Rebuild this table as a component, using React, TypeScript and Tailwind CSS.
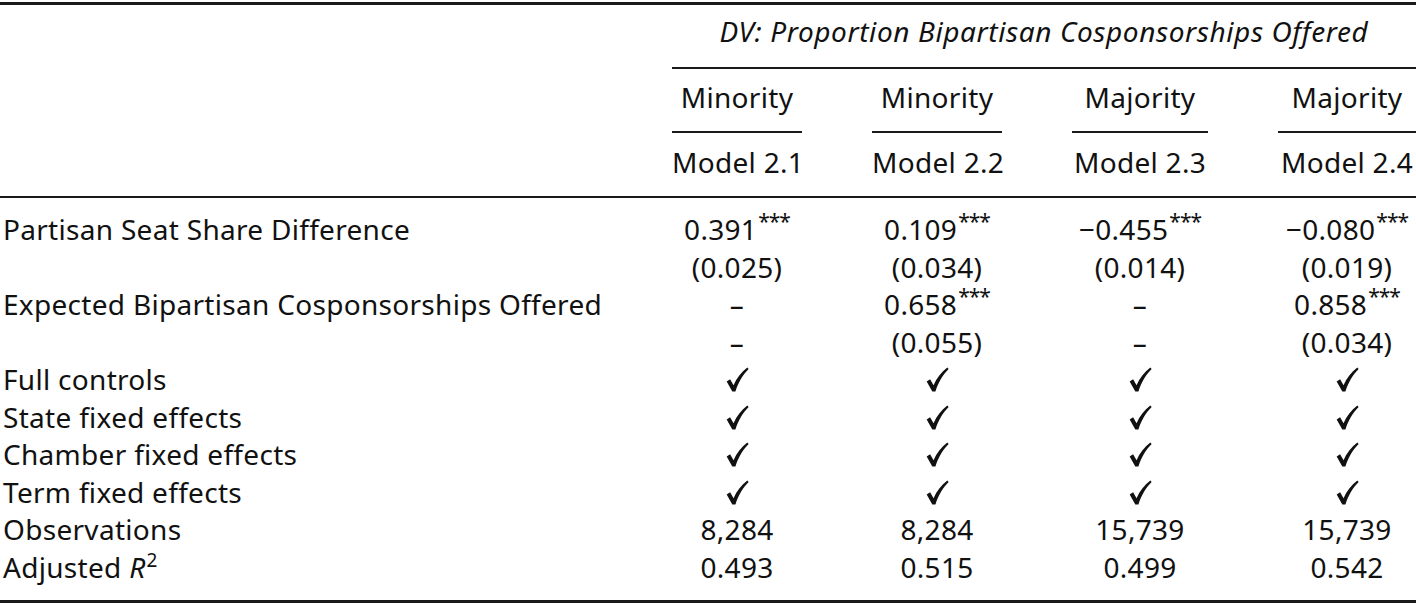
import React from "react";

const Check = () => (
  <svg width="23" height="25" viewBox="0 0 22 24" className="inline-block" aria-hidden="true">
    <path
      d="M0.6 13.8 L3.9 11.7 L7.2 17.6 C10.2 10.4 14.6 4.9 20.4 0.4 L21.7 1.8 C16.3 7 11.9 14.3 9 23.5 L6 23.5 Z"
      fill="#111"
    />
  </svg>
);

const Stars = () => (
  <span className="relative -top-[8px] ml-[1px] text-[21px] leading-none tracking-[-1px]">***</span>
);

type Cell = React.ReactNode;

const rows: { label: Cell; cells: Cell[] }[] = [
  {
    label: "Partisan Seat Share Difference",
    cells: [
      <>0.391<Stars /></>,
      <>0.109<Stars /></>,
      <>−0.455<Stars /></>,
      <>−0.080<Stars /></>,
    ],
  },
  { label: "", cells: ["(0.025)", "(0.034)", "(0.014)", "(0.019)"] },
  {
    label: "Expected Bipartisan Cosponsorships Offered",
    cells: ["–", <>0.658<Stars /></>, "–", <>0.858<Stars /></>],
  },
  { label: "", cells: ["–", "(0.055)", "–", "(0.034)"] },
  { label: "Full controls", cells: [<Check />, <Check />, <Check />, <Check />] },
  { label: "State fixed effects", cells: [<Check />, <Check />, <Check />, <Check />] },
  { label: "Chamber fixed effects", cells: [<Check />, <Check />, <Check />, <Check />] },
  { label: "Term fixed effects", cells: [<Check />, <Check />, <Check />, <Check />] },
  { label: "Observations", cells: ["8,284", "8,284", "15,739", "15,739"] },
  {
    label: (
      <>
        Adjusted <span className="italic">R</span>
        <span className="relative -top-[11px] ml-[1px] text-[19px] leading-none">2</span>
      </>
    ),
    cells: ["0.493", "0.515", "0.499", "0.542"],
  },
];

const grid = "grid grid-cols-[602px_130px_130px_136px_138px] gap-x-[70px]";

export default function App() {
  return (
    <div className="w-[1416px] h-[607px] overflow-hidden bg-white text-[#111] font-['Noto_Sans',sans-serif] text-[28px] tracking-[0.3px]">
      <div className="mt-[2px] h-[3px] bg-[#1a1a1a]" />
      {/* header */}
      <div className={grid}>
        <div />
        <div className="col-span-4 h-[64px] border-b-2 border-[#1a1a1a] pt-[8px] text-center italic leading-[37.5px] tracking-[0.6px] whitespace-nowrap">
          DV: Proportion Bipartisan Cosponsorships Offered
        </div>
        <div />
        {["Minority", "Minority", "Majority", "Majority"].map((t, i) => (
          <div
            key={"g" + i}
            className="h-[64px] border-b-2 border-[#1a1a1a] pt-[10px] text-center leading-[37.5px]"
          >
            {t}
          </div>
        ))}
        <div />
        {["Model 2.1", "Model 2.2", "Model 2.3", "Model 2.4"].map((t, i) => (
          <div key={"m" + i} className="h-[63px] pt-[11px] text-center leading-[37.5px] whitespace-nowrap">
            {t}
          </div>
        ))}
      </div>
      <div className="h-[2px] bg-[#1a1a1a]" />
      {/* body */}
      <div className={grid + " pt-[13px] pb-[14px]"}>
        {rows.map((r, ri) => (
          <React.Fragment key={ri}>
            <div className="h-[37.5px] pl-[3px] leading-[37.5px] whitespace-nowrap">{r.label}</div>
            {r.cells.map((c, ci) => (
              <div
                key={ci}
                className="flex h-[37.5px] items-center justify-center whitespace-nowrap leading-[37.5px]"
              >
                {c}
              </div>
            ))}
          </React.Fragment>
        ))}
      </div>
      <div className="h-[3px] bg-[#1a1a1a]" />
    </div>
  );
}
